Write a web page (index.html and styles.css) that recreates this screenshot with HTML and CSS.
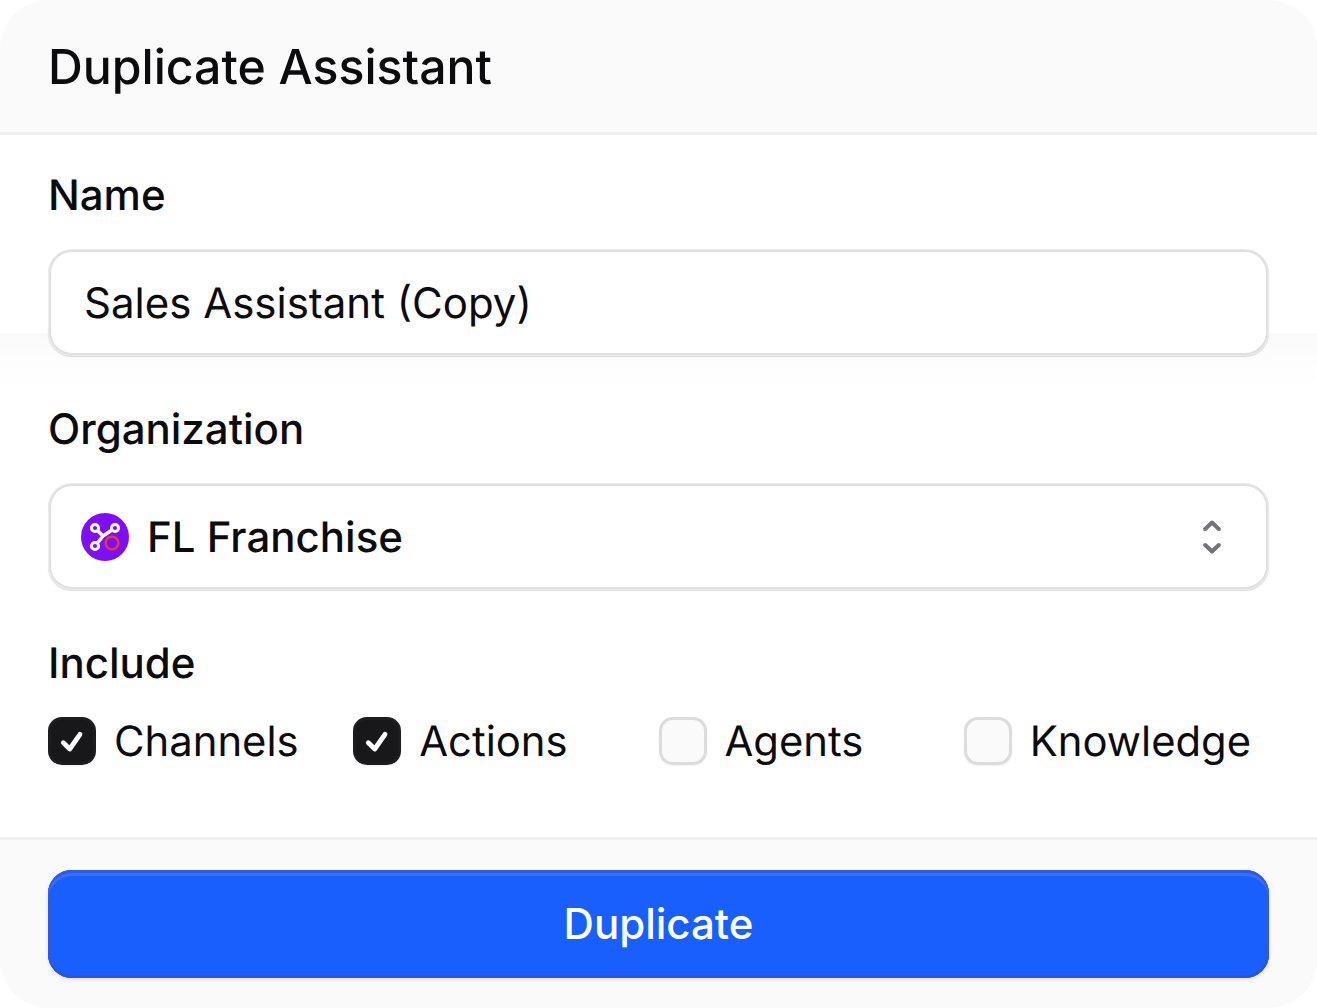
FILE: index.html
```html
<!DOCTYPE html>
<html>

<head>
	<title>Duplicate Assistant</title>
	<link rel="stylesheet" href="styles.css">
</head>

<body>
	<div class="dialog">
		<div class="dialog-header">
			<h2>Duplicate Assistant</h2>
		</div>

		<div class="dialog-body">
			<div class="field">
				<label class="field-label">Name</label>
				<div class="input"><span class="input-text">Sales Assistant (Copy)</span></div>
			</div>

			<div class="field">
				<label class="field-label">Organization</label>
				<div class="input select">
					<svg class="org-logo" viewBox="0 0 48 48">
						<circle cx="24" cy="24" r="24" fill="#7f0df5"/>
						<path d="M14 15L22 23L34 15M22 23L14 33" fill="none" stroke="#fff" stroke-width="3.5"/>
						<circle cx="14" cy="15" r="3.6" fill="#7f0df5" stroke="#fff" stroke-width="3"/>
						<circle cx="34" cy="15" r="3.6" fill="#7f0df5" stroke="#fff" stroke-width="3"/>
						<circle cx="14" cy="33" r="3.6" fill="#7f0df5" stroke="#fff" stroke-width="3"/>
						<circle cx="31" cy="30" r="6.4" fill="#7f0df5" stroke="#e8402a" stroke-width="2.4"/>
					</svg>
					<span class="input-text select-text">FL Franchise</span>
					<svg class="chevrons" viewBox="0 0 18 34">
						<path d="M2.2 9L9 2.5L15.8 9M2.2 25L9 31.5L15.8 25" fill="none" stroke="#737378" stroke-width="4" stroke-linecap="round" stroke-linejoin="round"/>
					</svg>
				</div>
			</div>

			<div class="field">
				<label class="field-label">Include</label>
				<div class="check-grid">
					<div class="check-item">
						<span class="box checked">
							<svg viewBox="0 0 24 24"><path d="M5.5 13.3L10.3 18L18 7" fill="none" stroke="#fff" stroke-width="3.6" stroke-linecap="round" stroke-linejoin="round"/></svg>
						</span>
						<span>Channels</span>
					</div>
					<div class="check-item">
						<span class="box checked">
							<svg viewBox="0 0 24 24"><path d="M5.5 13.3L10.3 18L18 7" fill="none" stroke="#fff" stroke-width="3.6" stroke-linecap="round" stroke-linejoin="round"/></svg>
						</span>
						<span>Actions</span>
					</div>
					<div class="check-item"><span class="box"></span><span>Agents</span></div>
					<div class="check-item"><span class="box"></span><span>Knowledge</span></div>
				</div>
			</div>
		</div>

		<div class="dialog-footer">
			<button class="primary-btn">Duplicate</button>
		</div>
	</div>
</body>

</html>
```

FILE: styles.css
```css
body {
	margin: 0;
	padding: 0;
	background-color: #ffffff;
	font-family: Inter, "Liberation Sans", sans-serif;
	color: #0b0b0d;
	text-rendering: geometricPrecision;
}

.dialog {
	height: 1008px;
	display: flex;
	flex-direction: column;
	border-radius: 48px;
	overflow: hidden;
}

.dialog-header {
	box-sizing: border-box;
	padding: 38px 48px 0;
	background-color: #fafafa;
	border-bottom: 3px solid #f0f0f0;
	flex: none;
	height: 135px;
}

.dialog-header h2 {
	margin: 0;
	font-size: 48.2px;
	line-height: 58px;
	font-weight: 450;
}

.dialog-body {
	height: 702px;
	box-sizing: border-box;
	padding: 35px 48px 0;
	display: flex;
	flex-direction: column;
	gap: 48px;
	flex: none;
	background: linear-gradient(#ffffff 198px, #fafafa 198px, #ffffff 250px);
}

.field-label {
	display: block;
	font-size: 42px;
	line-height: 52px;
	font-weight: 450;
	margin-bottom: 28px;
}

.input {
	height: 105px;
	margin: 1px;
	box-sizing: border-box;
	border: 2px solid #e0e0e0;
	border-radius: 23px;
	background-color: #ffffff;
	box-shadow: 0 0 0 1px #ececec, 0 1px 1px 1px rgba(0, 0, 0, 0.14);
	padding: 0 33px;
	display: flex;
	align-items: center;
	font-size: 42px;
}

.input-text {
	padding-top: 2px;
}

.select {
	padding: 0 30px;
	font-weight: 450;
}

.org-logo {
	width: 48px;
	height: 48px;
	margin-right: 18px;
	flex: none;
}

.select-text {
	flex: 1;
}

.chevrons {
	width: 18px;
	height: 34px;
	margin-right: 15px;
}

.check-grid {
	display: grid;
	grid-template-columns: repeat(4, 1fr);
}

.check-item {
	display: flex;
	align-items: flex-start;
	gap: 18px;
	font-size: 41.8px;
	line-height: 48px;
	white-space: nowrap;
}

.box {
	width: 48px;
	height: 48px;
	margin-top: -1px;
	box-sizing: border-box;
	border: 3px solid #dcdcdc;
	border-radius: 14px;
	background-color: #fafafa;
	box-shadow: 0 1px 2px rgba(0, 0, 0, 0.06);
	display: flex;
	align-items: center;
	justify-content: center;
	flex: none;
}

.box.checked {
	background-color: #18181b;
	border-color: #1d1d20;
}

.box svg {
	width: 32px;
	height: 32px;
}

.dialog-footer {
	flex: 1;
	padding: 30px 48px 0;
	background-color: #fafafa;
	border-top: 3px solid #f0f0f0;
}

.primary-btn {
	display: block;
	width: 100%;
	height: 108px;
	border: none;
	border-radius: 24px;
	padding: 0 0 2px;
	background-color: #195ffe;
	box-shadow: inset 0 3px 0 #2f5bdf, inset 0 6px 0 #3a70f5, inset 0 -3px 0 #2a55d8, inset 3px 0 0 #2a5ae6, inset -3px 0 0 #2a5ae6, 0 2px 4px rgba(0, 0, 0, 0.1);
	color: #ffffff;
	font-family: Inter, "Liberation Sans", sans-serif;
	font-size: 42px;
	font-weight: 450;
}
```
